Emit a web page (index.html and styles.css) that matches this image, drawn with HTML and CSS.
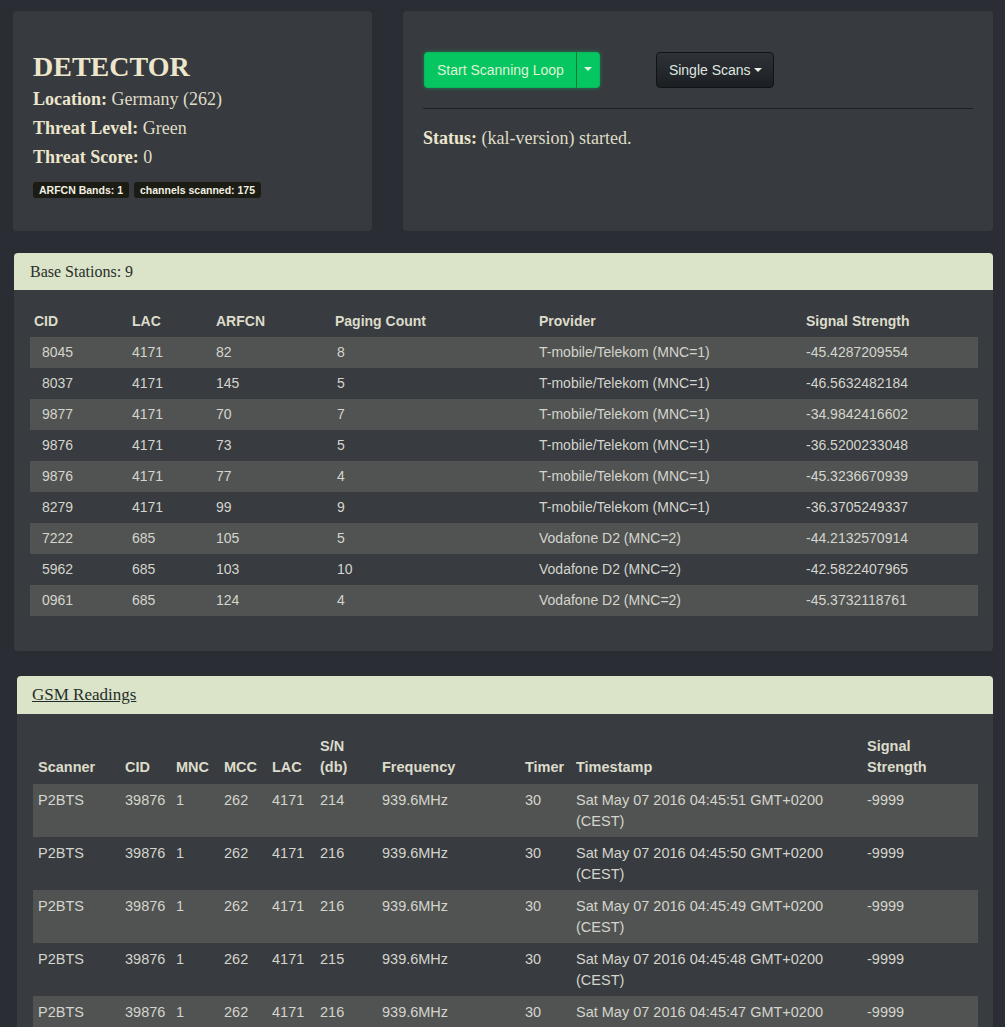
FILE: index.html
```html
<!DOCTYPE html>
<html>
<head>
<meta charset="utf-8">
<link rel="stylesheet" href="styles.css">
</head>
<body>
<div class="top-row">
  <div class="card card-info">
    <h1 class="title">DETECTOR</h1>
    <p class="line"><b>Location:</b> Germany (262)</p>
    <p class="line"><b>Threat Level:</b> Green</p>
    <p class="line"><b>Threat Score:</b> 0</p>
    <div class="badges">
      <span class="badge">ARFCN Bands: 1</span>
      <span class="badge">channels scanned: 175</span>
    </div>
  </div>
  <div class="card card-control">
    <div class="btn-row">
      <div class="btn-group">
        <button class="btn btn-green">Start Scanning Loop</button>
        <button class="btn btn-green btn-caret"><span class="caret"></span></button>
      </div>
      <button class="btn btn-dark">Single Scans <span class="caret"></span></button>
    </div>
    <hr class="divider">
    <p class="line status"><b>Status:</b> (kal-version) started.</p>
  </div>
</div>

<div class="panel panel-base">
  <div class="panel-head">Base Stations: 9</div>
  <div class="panel-body">
    <table class="grid grid-base">
      <colgroup>
        <col style="width:98px"><col style="width:84px"><col style="width:119px"><col style="width:204px"><col style="width:267px"><col style="width:176px">
      </colgroup>
      <thead>
        <tr><th>CID</th><th>LAC</th><th>ARFCN</th><th>Paging Count</th><th>Provider</th><th>Signal Strength</th></tr>
      </thead>
      <tbody>
        <tr><td class="c1">8045</td><td>4171</td><td>82</td><td class="c4">8</td><td>T-mobile/Telekom (MNC=1)</td><td>-45.4287209554</td></tr>
        <tr><td class="c1">8037</td><td>4171</td><td>145</td><td class="c4">5</td><td>T-mobile/Telekom (MNC=1)</td><td>-46.5632482184</td></tr>
        <tr><td class="c1">9877</td><td>4171</td><td>70</td><td class="c4">7</td><td>T-mobile/Telekom (MNC=1)</td><td>-34.9842416602</td></tr>
        <tr><td class="c1">9876</td><td>4171</td><td>73</td><td class="c4">5</td><td>T-mobile/Telekom (MNC=1)</td><td>-36.5200233048</td></tr>
        <tr><td class="c1">9876</td><td>4171</td><td>77</td><td class="c4">4</td><td>T-mobile/Telekom (MNC=1)</td><td>-45.3236670939</td></tr>
        <tr><td class="c1">8279</td><td>4171</td><td>99</td><td class="c4">9</td><td>T-mobile/Telekom (MNC=1)</td><td>-36.3705249337</td></tr>
        <tr><td class="c1">7222</td><td>685</td><td>105</td><td class="c4">5</td><td>Vodafone D2 (MNC=2)</td><td>-44.2132570914</td></tr>
        <tr><td class="c1">5962</td><td>685</td><td>103</td><td class="c4">10</td><td>Vodafone D2 (MNC=2)</td><td>-42.5822407965</td></tr>
        <tr><td class="c1">0961</td><td>685</td><td>124</td><td class="c4">4</td><td>Vodafone D2 (MNC=2)</td><td>-45.3732118761</td></tr>
      </tbody>
    </table>
  </div>
</div>

<div class="panel panel-gsm">
  <div class="panel-head"><a class="head-link">GSM Readings</a></div>
  <div class="panel-body">
    <table class="grid grid-gsm">
      <colgroup>
        <col style="width:87px"><col style="width:51px"><col style="width:48px"><col style="width:48px"><col style="width:48px"><col style="width:62px"><col style="width:143px"><col style="width:51px"><col style="width:291px"><col style="width:116px">
      </colgroup>
      <thead>
        <tr><th>Scanner</th><th>CID</th><th>MNC</th><th>MCC</th><th>LAC</th><th>S/N<br>(db)</th><th>Frequency</th><th>Timer</th><th>Timestamp</th><th>Signal<br>Strength</th></tr>
      </thead>
      <tbody>
        <tr><td>P2BTS</td><td>39876</td><td>1</td><td>262</td><td>4171</td><td>214</td><td>939.6MHz</td><td>30</td><td>Sat May 07 2016 04:45:51 GMT+0200 (CEST)</td><td>-9999</td></tr>
        <tr><td>P2BTS</td><td>39876</td><td>1</td><td>262</td><td>4171</td><td>216</td><td>939.6MHz</td><td>30</td><td>Sat May 07 2016 04:45:50 GMT+0200 (CEST)</td><td>-9999</td></tr>
        <tr><td>P2BTS</td><td>39876</td><td>1</td><td>262</td><td>4171</td><td>216</td><td>939.6MHz</td><td>30</td><td>Sat May 07 2016 04:45:49 GMT+0200 (CEST)</td><td>-9999</td></tr>
        <tr><td>P2BTS</td><td>39876</td><td>1</td><td>262</td><td>4171</td><td>215</td><td>939.6MHz</td><td>30</td><td>Sat May 07 2016 04:45:48 GMT+0200 (CEST)</td><td>-9999</td></tr>
        <tr><td>P2BTS</td><td>39876</td><td>1</td><td>262</td><td>4171</td><td>216</td><td>939.6MHz</td><td>30</td><td>Sat May 07 2016 04:45:47 GMT+0200 (CEST)</td><td>-9999</td></tr>
      </tbody>
    </table>
  </div>
</div>
</body>
</html>
```

FILE: styles.css
```css
html {
  scrollbar-width: none;
}
html::-webkit-scrollbar {
  display: none;
}
body {
  margin: 0;
  background: #2a2d33;
  color: #e3e0c8;
  font-family: "Liberation Serif", "Times New Roman", serif;
}

.top-row {
  display: flex;
  gap: 31px;
  padding: 11px 12px 0 13px;
}

.card {
  background: #373a3f;
  border-radius: 4px;
  box-sizing: border-box;
}

.card-info {
  width: 359px;
  padding: 20px 20px 33px 20px;
}

.card-control {
  flex: 1;
  padding: 41px 20px 20px 20px;
}

.title {
  margin: 20px 0 3px 0;
  font-size: 28px;
  line-height: 31px;
  font-weight: bold;
  color: #ece6cc;
}

.line {
  margin: 0;
  font-size: 18px;
  line-height: 29px;
  color: #dfdcc6;
}
.line b {
  color: #ece6cc;
}

.badges {
  display: flex;
  gap: 5px;
  margin-top: 10px;
}

.badge {
  font-family: "Liberation Sans", Arial, sans-serif;
  font-size: 10.5px;
  font-weight: bold;
  line-height: 16px;
  padding: 0 6px;
  background: #1b1c13;
  color: #f2f0e2;
  border-radius: 3px;
}

.btn-row {
  display: flex;
  gap: 56px;
  padding-left: 1px;
}

.btn-group {
  display: flex;
  border-radius: 4px;
  box-shadow: 0 0 4px rgba(0, 210, 100, 0.45);
}

.btn {
  font-family: "Liberation Sans", Arial, sans-serif;
  font-size: 14px;
  height: 36px;
  padding: 0 12px;
  border-radius: 4px;
  cursor: pointer;
}

.btn-green {
  background: #05c660;
  color: #dff3d6;
  border: 1px solid #08b95a;
}
.btn-group .btn-green:first-child {
  border-radius: 4px 0 0 4px;
  border-right: none;
}
.btn-caret {
  width: 24px;
  padding: 0;
  border-radius: 0 4px 4px 0;
  border-left: 1px solid #077a3a;
  display: flex;
  align-items: center;
  justify-content: center;
}

.caret {
  display: inline-block;
  width: 0;
  height: 0;
  border-top: 4px solid #e6efe0;
  border-left: 4px solid transparent;
  border-right: 4px solid transparent;
  vertical-align: middle;
  margin-bottom: 2px;
}

.btn-dark {
  width: 118px;
  background: linear-gradient(#2f3338, #1b1e22);
  color: #dfe6e0;
  border: 1px solid #121316;
  padding: 0 10px 0 12px;
  text-align: left;
}

.divider {
  margin: 20px 0 15px 0;
  border: none;
  border-top: 1px solid #1f2125;
}

.status {
  margin-top: 0;
}

.panel {
  margin-right: 12px;
  border-radius: 4px;
  overflow: hidden;
}

.panel-base {
  margin-top: 22px;
  margin-left: 14px;
}

.panel-gsm {
  margin-top: 25px;
  margin-left: 17px;
}

.panel-head {
  background: #dbe3c8;
  color: #2a2f2c;
  font-size: 16px;
  height: 37px;
  line-height: 37px;
  padding-left: 16px;
}

.panel-gsm .panel-head {
  height: 38px;
  line-height: 38px;
  padding-left: 15px;
  font-size: 17px;
}

.head-link {
  color: #1f2d2a;
  text-decoration: underline;
}

.panel-body {
  background: #383b3f;
}

.panel-base .panel-body {
  padding: 16px 15px 35px 16px;
}

.panel-gsm .panel-body {
  padding: 16px 15px 30px 16px;
}

.grid {
  width: 100%;
  table-layout: fixed;
  border-collapse: collapse;
  font-family: "Liberation Sans", Arial, sans-serif;
  font-size: 14px;
}

.grid th {
  text-align: left;
  font-weight: bold;
  color: #dcdccb;
  line-height: 21px;
  padding: 5px 4px;
  vertical-align: bottom;
}

.grid td {
  color: #d4d5cd;
  line-height: 21px;
  padding: 5px 4px;
  vertical-align: top;
}

.grid tbody tr:nth-child(odd) {
  background: #515352;
}

.grid-base td.c1 {
  padding-left: 12px;
}
.grid-base td.c4 {
  padding-left: 6px;
}

.grid-gsm {
  font-size: 14.5px;
}
.grid-gsm th {
  padding: 6px 5px 6px 5px;
}
.grid-gsm td {
  padding: 6px 5px 5px 5px;
}
```
